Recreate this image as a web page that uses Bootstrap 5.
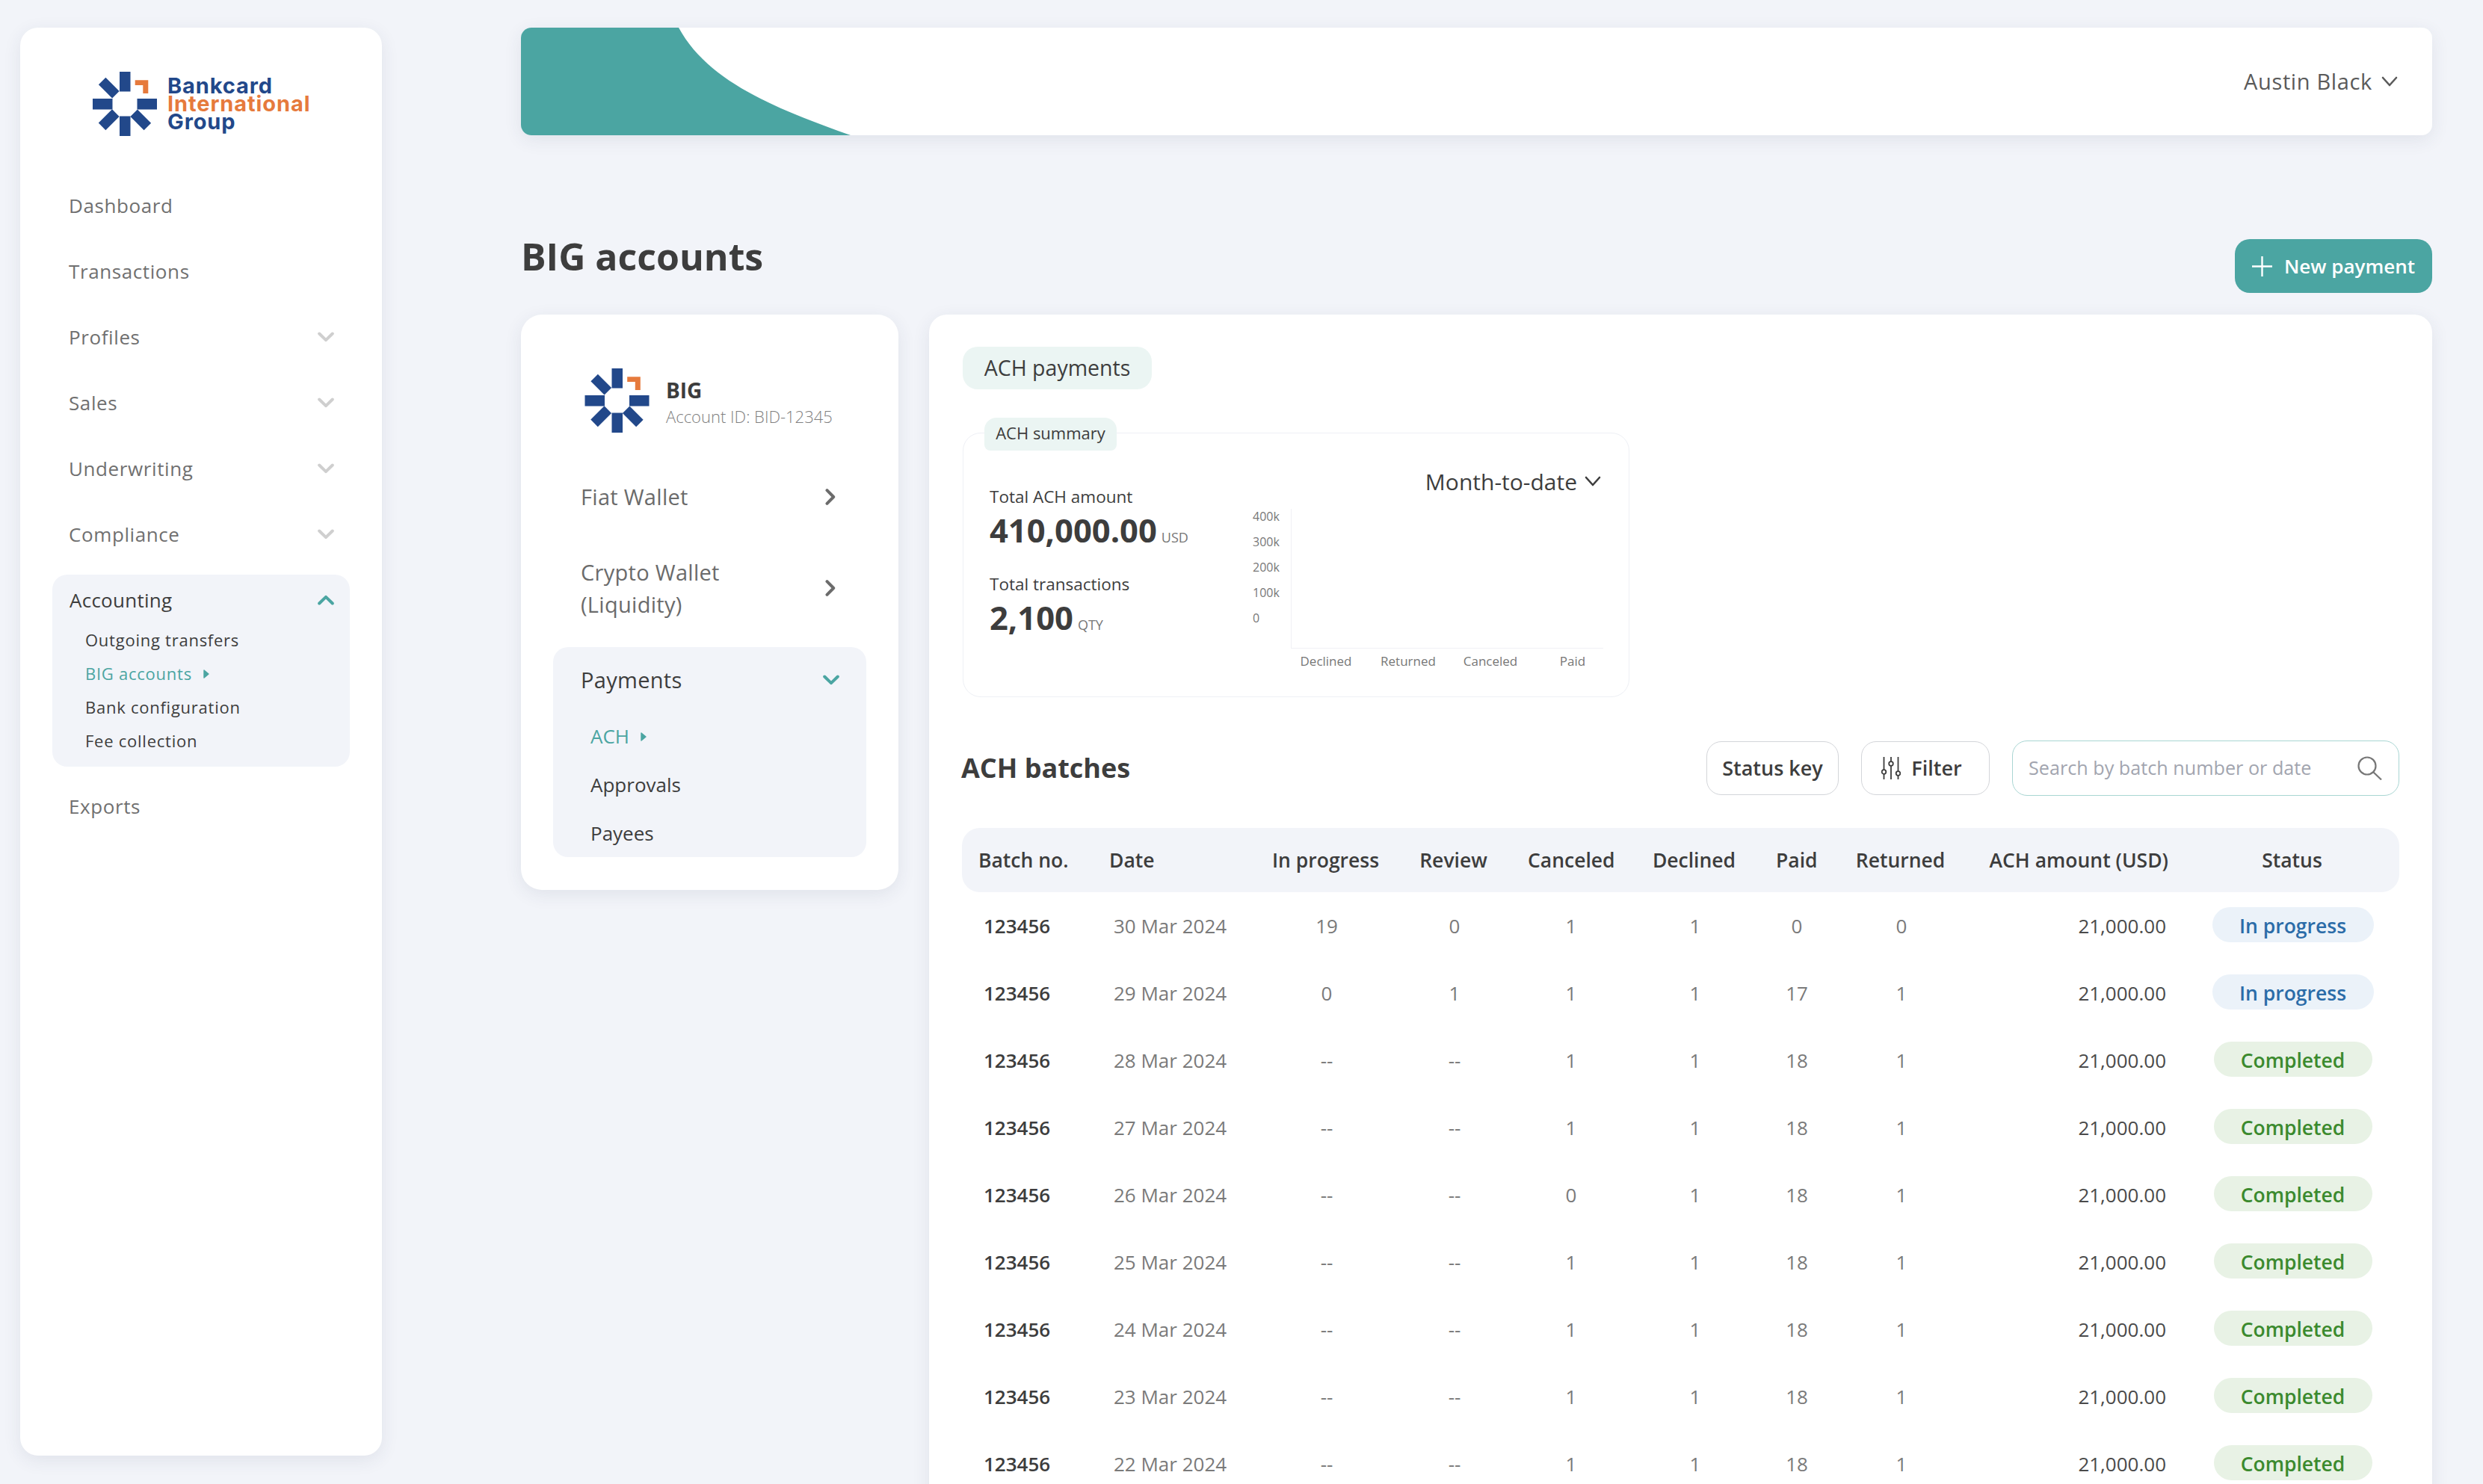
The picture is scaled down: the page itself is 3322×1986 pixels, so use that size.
<!DOCTYPE html>
<html lang="en">
<head>
<meta charset="UTF-8">
<title>BIG accounts</title>
<link href="https://cdn.jsdelivr.net/npm/bootstrap@5.3.3/dist/css/bootstrap.min.css" rel="stylesheet">
<style>
  html, body { height: 1986px; overflow: hidden; }
  body { background: #f2f4f9; font-family: "Open Sans", sans-serif; color: #3d3d3d; }
  .page-wrap { width: 3322px; height: 1986px; overflow: hidden; }

  /* left sidebar */
  .side-panel { width: 484px; height: 1911px; margin: 37px 186px 0 27px; flex: none; background: #fff; border-radius: 24px; padding: 59px 43px 0; box-shadow: 0 6px 24px rgba(40, 50, 90, .09); }
  .logo-row { height: 86px; margin: 0 0 49px 54px; gap: 14px; }
  .logo-text { font-family: Inter, "Liberation Sans", sans-serif; font-weight: 700; font-size: 29px; line-height: 24px; letter-spacing: .9px; color: #22488a; white-space: nowrap; }
  .logo-text .accent { color: #e67a3c; display: block; }
  .side-link { height: 88px; padding: 0 21px 0 22px; font-size: 26px; letter-spacing: .6px; color: #707070; }
  .open-group { background: #f2f4f9; border-radius: 20px; height: 257px; margin: 10px 0 9px; padding: 0 21px 0 23px; }
  .open-head { height: 68px; margin-bottom: -3px; font-size: 26px; color: #3d3d3d; letter-spacing: .25px; }
  .sub-link { height: 45px; padding-left: 21px; font-size: 22px; letter-spacing: .75px; font-weight: 500; color: #3d3d3d; }
  .sub-link.current { color: #4ba5a2; }
  .caret-mark { width: 8px; height: 12px; margin-left: 15px; }
  .flip-up { transform: rotate(180deg); }

  /* top bar */
  .main-col { width: 2557px; flex: none; }
  .top-bar { height: 144px; margin-top: 37px; background: #fff; border-radius: 14px; box-shadow: 0 6px 24px rgba(40, 50, 90, .09); overflow: hidden; padding-right: 46px; }
  .bar-shape { width: 441px; height: 144px; flex: none; }
  .user-name { font-size: 29px; letter-spacing: .65px; color: #5a5a5a; gap: 12px; }

  .title-row { height: 72px; margin-top: 139px; margin-bottom: 29px; }
  .page-title { font-size: 50px; font-weight: 700; margin: 0 0 26px; color: #3d3d3d; }
  .btn-new { background: #4ba5a2; color: #fff; height: 72px; width: 264px; border-radius: 20px; border: 0; font-size: 26px; font-weight: 600; gap: 16px; padding: 0; }
  .btn-new:hover { background: #4ba5a2; color: #fff; }

  /* account card */
  .acct-panel { width: 505px; height: 770px; margin-right: 41px; flex: none; background: #fff; border-radius: 28px; padding: 72px 43px 0; box-shadow: 0 6px 24px rgba(40, 50, 90, .09); }
  .acct-head { margin-left: 42px; height: 86px; gap: 22px; }
  .acct-name { font-size: 28px; font-weight: 700; line-height: 36px; margin-top: 6px; }
  .acct-id { font-size: 22px; font-weight: 300; line-height: 34px; color: #7f7f7f; }
  .wallet-link { padding: 0 41px 0 37px; font-size: 29px; letter-spacing: .3px; line-height: 43px; color: #6b6b6b; margin-top: 58px; }
  .acct-head + .wallet-link { margin-top: 64px; }
  .pay-group { height: 281px; background: #f2f4f9; border-radius: 20px; padding: 0 36px 0 37px; margin-top: 36px; }
  .pay-head { height: 87px; font-size: 29px; letter-spacing: .3px; color: #3d3d3d; }
  .pay-link { height: 65px; padding-left: 13px; font-size: 26px; color: #3d3d3d; }
  .pay-link.current { color: #4ba5a2; }

  /* main card */
  .ach-panel { width: 2011px; height: 1700px; flex: none; background: #fff; border-radius: 24px; padding: 43px 44px 0 45px; box-shadow: 0 6px 24px rgba(40, 50, 90, .09); }
  .tag-lg { display: inline-block; height: 57px; width: 253px; line-height: 57px; text-align: center; background: #ebf5f3; border-radius: 20px; font-size: 28.5px; }
  .summary-box { width: 892px; height: 354px; margin-top: 58px; border: 1px solid #eef0f5; border-radius: 24px; padding: 0 34px 0 35px; }
  .tag-sm { width: 177px; height: 44px; line-height: 40px; margin: -21px 0 0 -7px; text-align: center; background: #ebf5f3; border-radius: 16px 16px 8px 8px; font-size: 22px; font-weight: 500; }
  .stat-col { width: 352px; flex: none; padding-top: 47px; }
  .stat-label { font-size: 22.5px; font-weight: 500; line-height: 30px; }
  .stat-label + .stat-value + .stat-label { margin-top: 18px; }
  .stat-value { font-size: 43.5px; font-weight: 700; line-height: 60px; }
  .stat-unit { font-size: 18px; font-weight: 400; color: #777; margin-left: 6px; }
  .period-row { height: 44px; margin: 19px 17px 8px 0; font-size: 30px; gap: 10px; }
  .y-labels { width: 51px; font-size: 16px; line-height: 34px; color: #777; }
  .plot-area { height: 187px; width: 418px; margin-top: 7px; border-left: 1px solid #f0f1f5; border-bottom: 1px solid #f0f1f5; }
  .x-labels { width: 440px; margin: 5px 0 0 43px; font-size: 17px; line-height: 24px; color: #777; }
  .x-labels span { width: 110px; text-align: center; }

  .batch-row { height: 74px; margin-top: 58px; margin-bottom: 43px; }
  .batch-title { font-size: 36px; font-weight: 700; margin: 0 auto 0 -2px; }
  .btn-outline { height: 72px; background: #fff; border: 1px solid #d3d5d9; border-radius: 20px; font-size: 27px; font-weight: 600; color: #3d3d3d; padding: 0; gap: 14px; }
  .btn-status { width: 177px; margin-right: 30px; }
  .btn-filter { width: 172px; margin-right: 30px; padding-right: 10px; }
  .search-box { width: 518px; height: 74px; border: 1px solid #a9d6d3; border-radius: 20px; padding: 0 22px 0 21px; }
  .search-box .form-control { padding: 0; border: 0; box-shadow: none; font-size: 25.2px; background: transparent; color: #3d3d3d; }
  .search-box .form-control::placeholder { color: #a2a5af; }

  /* batches table */
  .batch-table { table-layout: fixed; width: 1923px; margin: 0 0 0 -1px; font-size: 26px; }
  .batch-table col:nth-child(1) { width: 197px; }
  .batch-table col:nth-child(2) { width: 218px; }
  .batch-table col:nth-child(3) { width: 146px; }
  .batch-table col:nth-child(4) { width: 196px; }
  .batch-table col:nth-child(5) { width: 116px; }
  .batch-table col:nth-child(6) { width: 216px; }
  .batch-table col:nth-child(7) { width: 56px; }
  .batch-table col:nth-child(8) { width: 224px; }
  .batch-table col:nth-child(9) { width: 270px; }
  .batch-table col:nth-child(10) { width: 284px; }
  .batch-table > thead > tr > th { height: 86px; padding: 2px 0 0; vertical-align: middle; background: #f2f4f9; border: 0; font-size: 26.5px; font-weight: 600; color: #3d3d3d; box-shadow: none; white-space: nowrap; }
  .batch-table > thead > tr > th.text-center { padding-right: 3px; }
  .batch-table > thead th:first-child { border-radius: 24px 0 0 24px; padding-left: 22px; }
  .batch-table > thead th:nth-child(2) { padding-left: 0; margin-left: -1px; }
  .batch-table > thead th:last-child { border-radius: 0 24px 24px 0; }
  .batch-table > tbody > tr > td { height: 90px; padding: 0; vertical-align: middle; border: 0; background: transparent; box-shadow: none; color: #7a7a7a; }
  .batch-table > tbody > tr > td.batch-no { padding-left: 29px; font-weight: 600; color: #3d3d3d; }
  .batch-table td.date-cell { padding-left: 6px; }
  .batch-table > tbody > tr > td.amount-cell { padding-right: 28px; color: #4a4a4a; }
  .batch-table > thead > tr > th.amount-cell { padding-right: 25px; color: #3d3d3d; }
  .status-pill { display: inline-block; height: 47px; line-height: 50px; border-radius: 24px; font-size: 26.5px; font-weight: 600; margin: -3px 0 0 -1px; }
  .status-blue { background: #ebf2f9; color: #2b6ca8; width: 216px; }
  .status-green { background: #e8f2e5; color: #3b8a2e; width: 212px; }
</style>
</head>
<body>
<svg width="0" height="0" class="position-absolute">
  <symbol id="big-mark" viewBox="0 0 86 86">
    <g fill="#22488a">
      <rect x="36" y="0" width="14.5" height="26.5"/>
      <rect x="36" y="59.5" width="14.5" height="26.5"/>
      <rect x="0" y="36" width="26.5" height="14.5"/>
      <rect x="59.5" y="36" width="26.5" height="14.5"/>
      <rect x="36.3" y="0" width="13.5" height="25.8" transform="rotate(-45 43 43)"/>
      <rect x="36.3" y="0" width="13.5" height="25.8" transform="rotate(-135 43 43)"/>
      <rect x="36.3" y="0" width="13.5" height="25.8" transform="rotate(135 43 43)"/>
    </g>
    <path fill="#e67a3c" d="M56.7 11.3H74.3V29H67.3V18H56.7Z"/>
  </symbol>
  <symbol id="chev-down" viewBox="0 0 22 14">
    <path d="M2.2 2.5 11 11.2 19.8 2.5" fill="none" stroke="currentColor" stroke-width="4" stroke-linecap="round" stroke-linejoin="round"/>
  </symbol>
  <symbol id="chev-thin" viewBox="0 0 22 14">
    <path d="M2 2 11 12 20 2" fill="none" stroke="currentColor" stroke-width="2.6" stroke-linecap="round" stroke-linejoin="round"/>
  </symbol>
  <symbol id="chev-right" viewBox="0 0 14 22">
    <path d="M2.5 2.2 11.2 11 2.5 19.8" fill="none" stroke="currentColor" stroke-width="4" stroke-linecap="round" stroke-linejoin="round"/>
  </symbol>
  <symbol id="caret" viewBox="0 0 8 12">
    <path d="M1 1 7 6 1 11Z" fill="currentColor" stroke="currentColor" stroke-width="1.4" stroke-linejoin="round"/>
  </symbol>
</svg>

<div class="page-wrap d-flex">
  <aside class="side-panel">
    <div class="logo-row d-flex align-items-center">
      <svg width="86" height="86"><use href="#big-mark"/></svg>
      <div class="logo-text">Bankcard<span class="accent">International</span>Group</div>
    </div>
    <nav class="nav flex-column">
      <a class="side-link d-flex align-items-center justify-content-between text-decoration-none" href="#">Dashboard</a>
      <a class="side-link d-flex align-items-center justify-content-between text-decoration-none" href="#">Transactions</a>
      <a class="side-link d-flex align-items-center justify-content-between text-decoration-none" href="#">Profiles <svg width="22" height="14"><use href="#chev-down" color="#cfcfcf"/></svg></a>
      <a class="side-link d-flex align-items-center justify-content-between text-decoration-none" href="#">Sales <svg width="22" height="14"><use href="#chev-down" color="#cfcfcf"/></svg></a>
      <a class="side-link d-flex align-items-center justify-content-between text-decoration-none" href="#">Underwriting <svg width="22" height="14"><use href="#chev-down" color="#cfcfcf"/></svg></a>
      <a class="side-link d-flex align-items-center justify-content-between text-decoration-none" href="#">Compliance <svg width="22" height="14"><use href="#chev-down" color="#cfcfcf"/></svg></a>
      <div class="open-group">
        <div class="open-head d-flex align-items-center justify-content-between">Accounting
          <svg width="22" height="14" class="flip-up"><use href="#chev-down" color="#4ba5a2"/></svg>
        </div>
        <a class="sub-link d-flex align-items-center text-decoration-none" href="#">Outgoing transfers</a>
        <a class="sub-link current d-flex align-items-center text-decoration-none" href="#">BIG accounts <svg class="caret-mark"><use href="#caret"/></svg></a>
        <a class="sub-link d-flex align-items-center text-decoration-none" href="#">Bank configuration</a>
        <a class="sub-link d-flex align-items-center text-decoration-none" href="#">Fee collection</a>
      </div>
      <a class="side-link d-flex align-items-center text-decoration-none" href="#">Exports</a>
    </nav>
  </aside>

  <div class="main-col">
    <header class="top-bar d-flex align-items-center justify-content-between">
      <svg class="bar-shape" viewBox="0 0 441 144"><path fill="#4ba5a2" d="M0 0H211C250 72 340 108 441 144H0Z"/></svg>
      <div class="user-name d-flex align-items-center">Austin Black <svg width="22" height="14"><use href="#chev-thin" color="#5a5a5a"/></svg></div>
    </header>

    <div class="title-row d-flex align-items-center justify-content-between">
      <h1 class="page-title">BIG accounts</h1>
      <button class="btn btn-new d-flex align-items-center justify-content-center" type="button">
        <svg width="27" height="27" viewBox="0 0 27 27"><path d="M13.5 0V27M0 13.5H27" stroke="#fff" stroke-width="2.4"/></svg>
        New payment
      </button>
    </div>

    <div class="d-flex align-items-start">
      <section class="acct-panel">
        <div class="acct-head d-flex align-items-center">
          <svg width="87" height="86"><use href="#big-mark"/></svg>
          <div>
            <div class="acct-name">BIG</div>
            <div class="acct-id">Account ID: BID-12345</div>
          </div>
        </div>
        <a class="wallet-link d-flex align-items-center justify-content-between text-decoration-none" href="#">Fiat Wallet <svg width="14" height="22"><use href="#chev-right" color="#6b6b6b"/></svg></a>
        <a class="wallet-link d-flex align-items-center justify-content-between text-decoration-none" href="#"><span>Crypto Wallet<br>(Liquidity)</span> <svg width="14" height="22"><use href="#chev-right" color="#6b6b6b"/></svg></a>
        <div class="pay-group">
          <div class="pay-head d-flex align-items-center justify-content-between">Payments <svg width="22" height="14"><use href="#chev-down" color="#4ba5a2"/></svg></div>
          <a class="pay-link current d-flex align-items-center text-decoration-none" href="#">ACH <svg class="caret-mark"><use href="#caret"/></svg></a>
          <a class="pay-link d-flex align-items-center text-decoration-none" href="#">Approvals</a>
          <a class="pay-link d-flex align-items-center text-decoration-none" href="#">Payees</a>
        </div>
      </section>

      <section class="ach-panel">
        <span class="tag-lg">ACH payments</span>
        <div class="summary-box">
          <div class="tag-sm">ACH summary</div>
          <div class="d-flex">
            <div class="stat-col">
              <div class="stat-label">Total ACH amount</div>
              <div class="stat-value">410,000.00<span class="stat-unit">USD</span></div>
              <div class="stat-label">Total transactions</div>
              <div class="stat-value">2,100<span class="stat-unit">QTY</span></div>
            </div>
            <div class="flex-grow-1">
              <div class="period-row d-flex align-items-center justify-content-end">Month-to-date <svg width="22" height="14"><use href="#chev-thin" color="#3d3d3d"/></svg></div>
              <div class="d-flex">
                <div class="y-labels"><div>400k</div><div>300k</div><div>200k</div><div>100k</div><div>0</div></div>
                <div class="plot-area"></div>
              </div>
              <div class="x-labels d-flex"><span>Declined</span><span>Returned</span><span>Canceled</span><span>Paid</span></div>
            </div>
          </div>
        </div>

        <div class="batch-row d-flex align-items-center">
          <h2 class="batch-title">ACH batches</h2>
          <button class="btn btn-outline btn-status" type="button">Status key</button>
          <button class="btn btn-outline btn-filter d-flex align-items-center justify-content-center" type="button">
            <svg width="26" height="30" viewBox="0 0 26 30" fill="none" stroke="#3d3d3d" stroke-width="1.8"><path d="M3.5 0V17M3.5 23V30M13 0V6M13 12V30M22.5 0V19M22.5 25V30"/><circle cx="3.5" cy="20" r="2.8"/><circle cx="13" cy="9" r="2.8"/><circle cx="22.5" cy="22" r="2.8"/></svg>
            Filter
          </button>
          <div class="search-box d-flex align-items-center">
            <input class="form-control" type="text" placeholder="Search by batch number or date">
            <svg width="34" height="32" viewBox="0 0 34 32" fill="none" stroke="#777" stroke-width="2.2" class="flex-shrink-0"><circle cx="14" cy="13" r="11.5"/><path d="M22.5 21.5 33 31.5"/></svg>
          </div>
        </div>

        <table class="table batch-table">
          <colgroup><col><col><col><col><col><col><col><col><col><col></colgroup>
          <thead>
            <tr><th>Batch no.</th><th>Date</th><th class="text-center">In progress</th><th class="text-center">Review</th><th class="text-center">Canceled</th><th class="text-center">Declined</th><th class="text-center">Paid</th><th class="text-center">Returned</th><th class="text-end amount-cell">ACH amount (USD)</th><th class="text-center">Status</th></tr>
          </thead>
          <tbody class="text-center">
            <tr><td class="batch-no text-start">123456</td><td class="date-cell text-start">30 Mar 2024</td><td>19</td><td>0</td><td>1</td><td>1</td><td>0</td><td>0</td><td class="text-end amount-cell">21,000.00</td><td><span class="status-pill status-blue">In progress</span></td></tr>
            <tr><td class="batch-no text-start">123456</td><td class="date-cell text-start">29 Mar 2024</td><td>0</td><td>1</td><td>1</td><td>1</td><td>17</td><td>1</td><td class="text-end amount-cell">21,000.00</td><td><span class="status-pill status-blue">In progress</span></td></tr>
            <tr><td class="batch-no text-start">123456</td><td class="date-cell text-start">28 Mar 2024</td><td>--</td><td>--</td><td>1</td><td>1</td><td>18</td><td>1</td><td class="text-end amount-cell">21,000.00</td><td><span class="status-pill status-green">Completed</span></td></tr>
            <tr><td class="batch-no text-start">123456</td><td class="date-cell text-start">27 Mar 2024</td><td>--</td><td>--</td><td>1</td><td>1</td><td>18</td><td>1</td><td class="text-end amount-cell">21,000.00</td><td><span class="status-pill status-green">Completed</span></td></tr>
            <tr><td class="batch-no text-start">123456</td><td class="date-cell text-start">26 Mar 2024</td><td>--</td><td>--</td><td>0</td><td>1</td><td>18</td><td>1</td><td class="text-end amount-cell">21,000.00</td><td><span class="status-pill status-green">Completed</span></td></tr>
            <tr><td class="batch-no text-start">123456</td><td class="date-cell text-start">25 Mar 2024</td><td>--</td><td>--</td><td>1</td><td>1</td><td>18</td><td>1</td><td class="text-end amount-cell">21,000.00</td><td><span class="status-pill status-green">Completed</span></td></tr>
            <tr><td class="batch-no text-start">123456</td><td class="date-cell text-start">24 Mar 2024</td><td>--</td><td>--</td><td>1</td><td>1</td><td>18</td><td>1</td><td class="text-end amount-cell">21,000.00</td><td><span class="status-pill status-green">Completed</span></td></tr>
            <tr><td class="batch-no text-start">123456</td><td class="date-cell text-start">23 Mar 2024</td><td>--</td><td>--</td><td>1</td><td>1</td><td>18</td><td>1</td><td class="text-end amount-cell">21,000.00</td><td><span class="status-pill status-green">Completed</span></td></tr>
            <tr><td class="batch-no text-start">123456</td><td class="date-cell text-start">22 Mar 2024</td><td>--</td><td>--</td><td>1</td><td>1</td><td>18</td><td>1</td><td class="text-end amount-cell">21,000.00</td><td><span class="status-pill status-green">Completed</span></td></tr>
          </tbody>
        </table>
      </section>
    </div>
  </div>
</div>
<script src="https://cdn.jsdelivr.net/npm/bootstrap@5.3.3/dist/js/bootstrap.bundle.min.js"></script>
</body>
</html>
